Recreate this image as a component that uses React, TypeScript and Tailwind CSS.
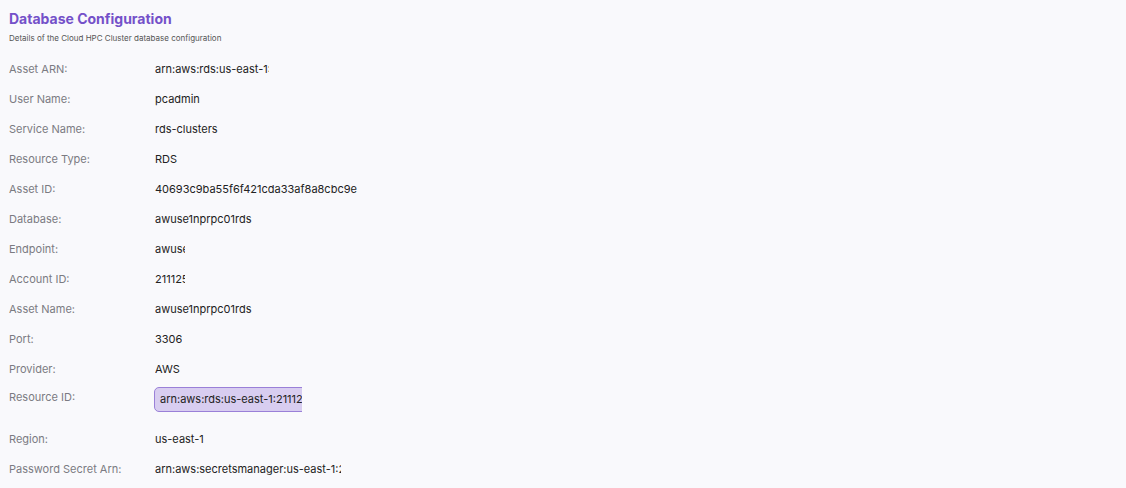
import React from 'react';

interface Field {
    label: string;
    value: string;
    clip?: string;
    highlight?: boolean;
}

const fields: Field[] = [
    { label: 'Asset ARN:', value: 'arn:aws:rds:us-east-1:211125000000:db:awuse1nprpc01rds', clip: 'w-[114px]' },
    { label: 'User Name:', value: 'pcadmin' },
    { label: 'Service Name:', value: 'rds-clusters' },
    { label: 'Resource Type:', value: 'RDS' },
    { label: 'Asset ID:', value: '40693c9ba55f6f421cda33af8a8cbc9e' },
    { label: 'Database:', value: 'awuse1nprpc01rds' },
    { label: 'Endpoint:', value: 'awuse1nprpc01rds.cluster.us-east-1.rds.amazonaws.com', clip: 'w-[30px]' },
    { label: 'Account ID:', value: '211125000000', clip: 'w-[30px]' },
    { label: 'Asset Name:', value: 'awuse1nprpc01rds' },
    { label: 'Port:', value: '3306' },
    { label: 'Provider:', value: 'AWS' },
    { label: 'Resource ID:', value: 'arn:aws:rds:us-east-1:211125000000:db:awuse1nprpc01rds', highlight: true },
    { label: 'Region:', value: 'us-east-1' },
    { label: 'Password Secret Arn:', value: 'arn:aws:secretsmanager:us-east-1:211125000000:secret:rds', clip: 'w-[186px]' },
];

export default function App() {
    return (
        <div className="w-[1126px] h-[488px] bg-[#f9f9fc] px-[9px] pt-[10px] overflow-hidden" style={{ fontFamily: 'Inter, "Noto Sans", sans-serif' }}>
            <h1 className="text-[14px] leading-[18px] font-bold text-[#7451c9]">Database Configuration</h1>
            <p className="text-[8px] leading-[10px] text-[#555] mt-[5px]">Details of the Cloud HPC Cluster database configuration</p>

            <div className="mt-[11px] flex flex-col">
                {fields.map(f => f.highlight ? (
                    <div key={f.label} className="flex h-[40px] items-start">
                        <div className="w-[145px] shrink-0 pt-[6px] text-[11px] leading-[14px] text-[#7b7b82]">{f.label}</div>
                        <div className="w-[148px] overflow-hidden mt-[3px]">
                            <div className="w-[200px] h-[25px] rounded-[5px] border border-[#9a80d8] bg-[#d8cdf0] pl-[5px] flex items-center text-[11px] text-[#222] whitespace-nowrap">
                                {f.value}
                            </div>
                        </div>
                    </div>
                ) : (
                    <div key={f.label} className="flex h-[30px] items-center">
                        <div className="w-[146px] shrink-0 text-[11px] leading-[14px] text-[#7b7b82]">{f.label}</div>
                        <div className={`${f.clip ?? ''} overflow-hidden whitespace-nowrap text-[11px] leading-[14px] text-[#222]`}>
                            {f.value}
                        </div>
                    </div>
                ))}
            </div>
        </div>
    );
}
